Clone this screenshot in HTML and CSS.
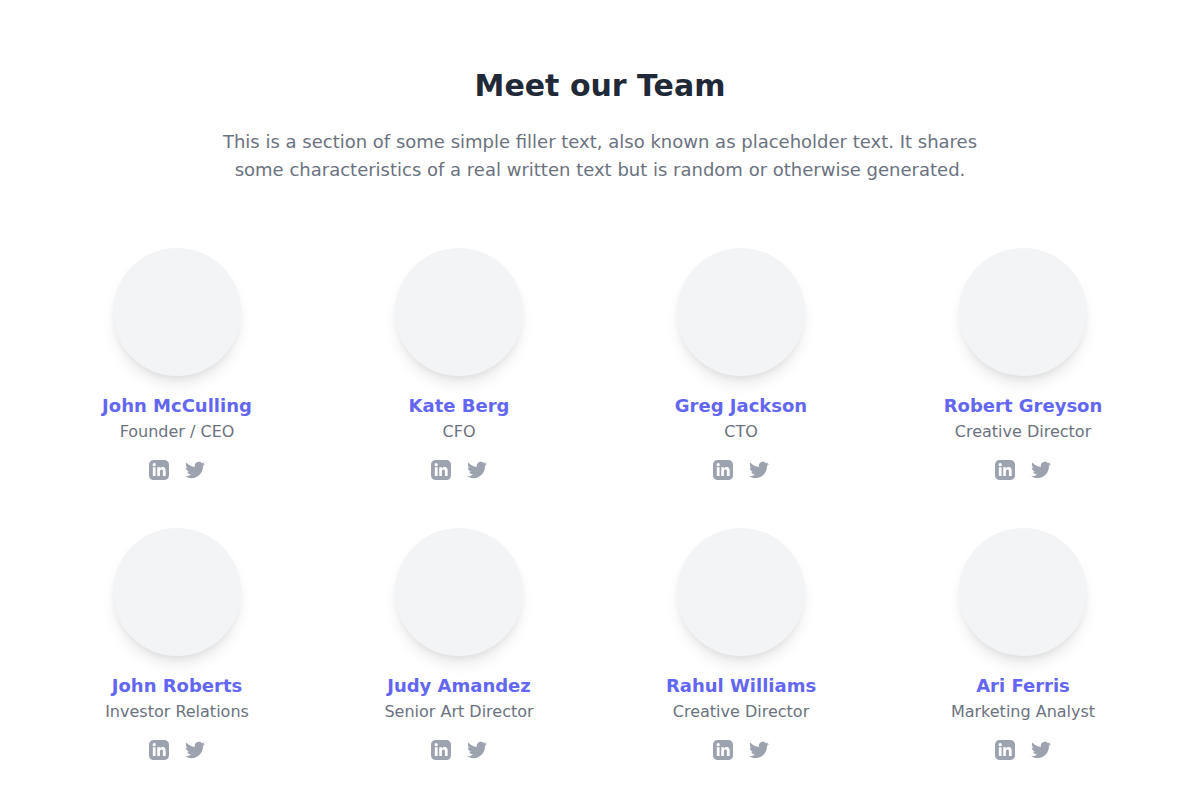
FILE: index.html
```
<!DOCTYPE html>
<html lang="en">
<head>
<meta charset="utf-8">
<meta name="viewport" content="width=device-width, initial-scale=1">
<title>Meet our Team</title>
<link rel="stylesheet" href="styles.css">
</head>
<body>
<svg class="sprite" aria-hidden="true">
  <symbol id="linkedin" viewBox="0 0 24 24"><path fill-rule="evenodd" d="M5.500 0h13a5.500 5.500 0 0 1 5.500 5.500v13a5.500 5.500 0 0 1-5.500 5.500h-13a5.500 5.500 0 0 1-5.500-5.500v-13a5.500 5.500 0 0 1 5.500-5.500zM4.600 8.700h3.300v10.500h-3.300zM6.250 3.600a1.950 1.950 0 1 0 0 3.900 1.950 1.950 0 0 0 0-3.900zM9.900 8.700h3.200v1.450c.5-.9 1.500-1.700 3.050-1.700 3.250 0 3.850 2.150 3.850 4.950v5.800h-3.300v-5.100c0-1.300 0-2.800-1.700-2.800s-1.900 1.300-1.900 2.700v5.200h-3.200z"/></symbol>
  <symbol id="twitter" viewBox="0 0 24 24"><path d="M24 4.557c-.883.392-1.832.656-2.828.775 1.017-.609 1.798-1.574 2.165-2.724-.951.564-2.005.974-3.127 1.195-.897-.957-2.178-1.555-3.594-1.555-3.179 0-5.515 2.966-4.797 6.045-4.091-.205-7.719-2.165-10.148-5.144-1.290 2.213-.669 5.108 1.523 6.574-.806-.026-1.566-.247-2.229-.616-.054 2.281 1.581 4.415 3.949 4.890-.693.188-1.452.232-2.224.084.626 1.956 2.444 3.379 4.600 3.419-2.070 1.623-4.678 2.348-7.290 2.040 2.179 1.397 4.768 2.212 7.548 2.212 9.142 0 14.307-7.721 13.995-14.646.962-.695 1.797-1.562 2.457-2.549z"/></symbol>
</svg>
<main class="team">
  <header class="intro">
    <h1 class="title">Meet our Team</h1>
    <p class="lead">This is a section of some simple filler text, also known as placeholder text. It shares some characteristics of a real written text but is random or otherwise generated.</p>
  </header>
  <div class="members">
    <article class="member"><div class="avatar"></div><h2 class="name">John McCulling</h2><p class="role">Founder / CEO</p><div class="social"><a href="#" aria-label="LinkedIn"><svg class="icon"><use href="#linkedin"/></svg></a><a href="#" aria-label="Twitter"><svg class="icon"><use href="#twitter"/></svg></a></div></article>
    <article class="member"><div class="avatar"></div><h2 class="name">Kate Berg</h2><p class="role">CFO</p><div class="social"><a href="#" aria-label="LinkedIn"><svg class="icon"><use href="#linkedin"/></svg></a><a href="#" aria-label="Twitter"><svg class="icon"><use href="#twitter"/></svg></a></div></article>
    <article class="member"><div class="avatar"></div><h2 class="name">Greg Jackson</h2><p class="role">CTO</p><div class="social"><a href="#" aria-label="LinkedIn"><svg class="icon"><use href="#linkedin"/></svg></a><a href="#" aria-label="Twitter"><svg class="icon"><use href="#twitter"/></svg></a></div></article>
    <article class="member"><div class="avatar"></div><h2 class="name">Robert Greyson</h2><p class="role">Creative Director</p><div class="social"><a href="#" aria-label="LinkedIn"><svg class="icon"><use href="#linkedin"/></svg></a><a href="#" aria-label="Twitter"><svg class="icon"><use href="#twitter"/></svg></a></div></article>
    <article class="member"><div class="avatar"></div><h2 class="name">John Roberts</h2><p class="role">Investor Relations</p><div class="social"><a href="#" aria-label="LinkedIn"><svg class="icon"><use href="#linkedin"/></svg></a><a href="#" aria-label="Twitter"><svg class="icon"><use href="#twitter"/></svg></a></div></article>
    <article class="member"><div class="avatar"></div><h2 class="name">Judy Amandez</h2><p class="role">Senior Art Director</p><div class="social"><a href="#" aria-label="LinkedIn"><svg class="icon"><use href="#linkedin"/></svg></a><a href="#" aria-label="Twitter"><svg class="icon"><use href="#twitter"/></svg></a></div></article>
    <article class="member"><div class="avatar"></div><h2 class="name">Rahul Williams</h2><p class="role">Creative Director</p><div class="social"><a href="#" aria-label="LinkedIn"><svg class="icon"><use href="#linkedin"/></svg></a><a href="#" aria-label="Twitter"><svg class="icon"><use href="#twitter"/></svg></a></div></article>
    <article class="member"><div class="avatar"></div><h2 class="name">Ari Ferris</h2><p class="role">Marketing Analyst</p><div class="social"><a href="#" aria-label="LinkedIn"><svg class="icon"><use href="#linkedin"/></svg></a><a href="#" aria-label="Twitter"><svg class="icon"><use href="#twitter"/></svg></a></div></article>
  </div>
</main>
</body>
</html>
```
FILE: styles.css
```
* {
  box-sizing: border-box;
  margin: 0;
}

body {
  background: #fff;
  color: #6b7280;
  font: 16px/24px "DejaVu Sans", sans-serif;
}

.sprite {
  display: none;
}

.team {
  max-width: 1280px;
  margin: 0 auto;
  padding: 64px 36px 40px;
}

.intro {
  max-width: 768px;
  margin: 0 auto 64px;
  text-align: center;
}

.title {
  margin-bottom: 20px;
  color: #1f2937;
  font-size: 30px;
  line-height: 44px;
}

.lead {
  font-size: 18px;
  line-height: 28px;
}

.members {
  display: grid;
  grid-template-columns: repeat(4, 1fr);
  gap: 48px 0;
}

.member {
  display: flex;
  flex-direction: column;
  align-items: center;
  text-align: center;
}

.avatar {
  width: 128px;
  height: 128px;
  margin-bottom: 16px;
  border-radius: 50%;
  background: #f3f4f6;
  box-shadow: 0 10px 15px -3px rgba(0, 0, 0, 0.1), 0 4px 6px -2px rgba(0, 0, 0, 0.05);
}

.name {
  color: #6366f1;
  font-size: 18px;
  line-height: 28px;
}

.role {
  margin-bottom: 16px;
}

.social {
  display: flex;
  gap: 16px;
}

.social a {
  color: #9ca3af;
}

.icon {
  display: block;
  width: 20px;
  height: 20px;
  fill: currentColor;
}

@media (max-width: 800px) {
  .members {
    grid-template-columns: repeat(2, 1fr);
  }
}
```
